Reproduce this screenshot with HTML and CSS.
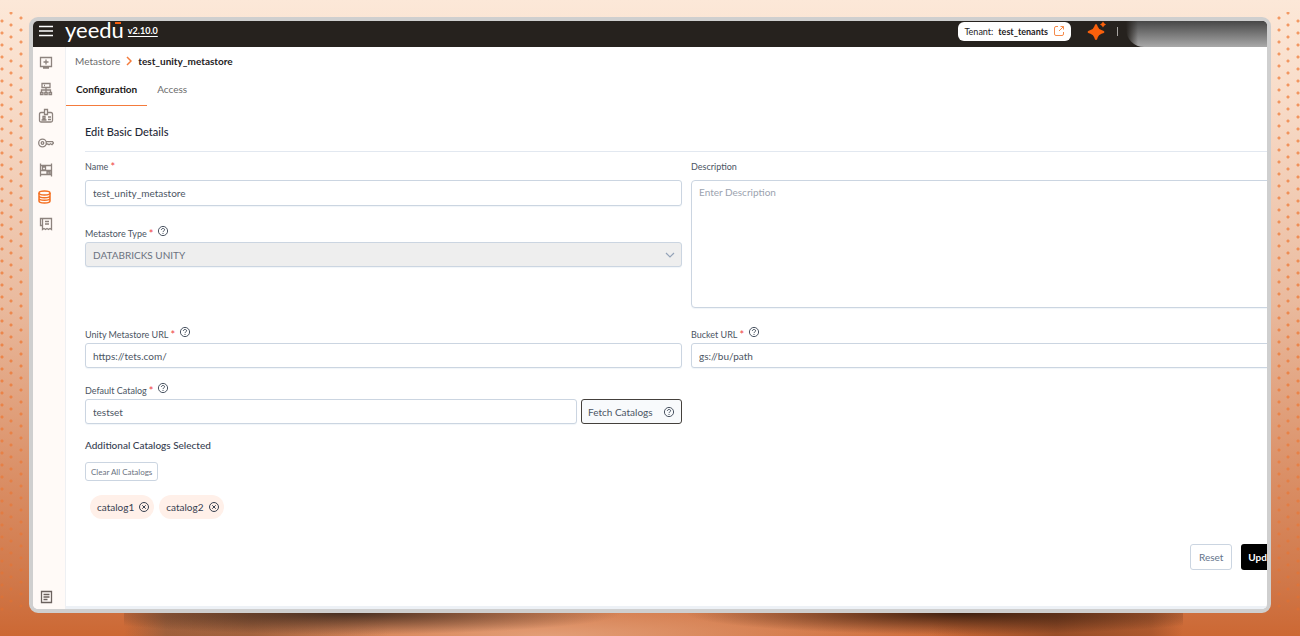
FILE: index.html
```
<!DOCTYPE html>
<html lang="en">
<head>
<meta charset="utf-8">
<title>Yeedu - Metastore</title>
<link rel="stylesheet" href="styles.css">
</head>
<body>
<svg class="sprite" aria-hidden="true">
  <symbol id="help" viewBox="0 0 12 12"><g fill="none" stroke="currentColor"><circle cx="6" cy="6" r="4.600"/><path d="M4.400 5c0-2.100 3.200-2 3.200-.200C7.600 5.900 6 5.800 6 7.100M6 8v1"/></g></symbol>
  <symbol id="close" viewBox="0 0 12 12"><g fill="none" stroke="currentColor"><circle cx="6" cy="6" r="4.500"/><path d="M4.300 4.300l3.400 3.400M7.700 4.300L4.300 7.700"/></g></symbol>
</svg>
<div class="dots dots-left"></div>
<div class="dots dots-right"></div>
<div class="floor"></div>
<main class="window">
  <header class="topbar">
    <button class="icon-button menu" aria-label="Menu"><svg width="14" height="12" viewBox="0 0 14 12"><path d="M0 1.500h14M0 6h14M0 10.500h14" stroke="#fff" stroke-width="1.600"/></svg></button>
    <span class="logo">yeed<span class="logo-u">u</span></span>
    <a class="version" href="#">v2.10.0</a>
    <a class="tenant" href="#"><span>Tenant:</span><b>test_tenants</b>
      <svg width="12" height="12" viewBox="0 0 12 12" fill="none" stroke="#f58a4b"><path d="M5 1.500H3Q1.500 1.500 1.500 3v6q0 1.500 1.500 1.500h6q1.500 0 1.500-1.500V7M6 6l4.500-4.500M7.500 1.500h3v3"/></svg></a>
    <button class="icon-button spark" aria-label="Assistant"><svg width="20" height="20" viewBox="0 0 20 20" fill="#f9600c"><path d="M9 3q1.200 0 1.700 2.500Q11.500 8 14.500 9q3 1 3 2t-3 1.800q-3 1-3.800 3.700Q10.200 19 9 19t-1.700-2.500Q6.500 13.800 3.500 12.800q-3-.800-3-1.800t3-2q3-1 3.800-3.500Q7.800 3 9 3z"/><path d="M16 .500q.800 2.200 3 3-2.200.800-3 3-.800-2.200-3-3 2.200-.800 3-3z"/></svg></button>
    <span class="divider"></span>
    <div class="account"></div>
  </header>
  <div class="body">
    <nav class="sidebar" aria-label="Main">
      <a href="#" aria-label="Workspaces"><svg viewBox="0 0 16 16"><path d="M2.500 3.500h11v9h-11zM5 14h6M8 5.500v5M5.500 8h5"/></svg></a>
      <a href="#" aria-label="Clusters"><svg viewBox="0 0 16 16"><path d="M4 2.500h8v4H4zM6 4.500h1M8 6.500v5M3.500 11V9h9v2M2.500 11.500h2.500v2H2.500zM6.800 11.500h2.400v2H6.800zM11 11.500h2.500v2H11z"/></svg></a>
      <a href="#" aria-label="Credentials"><svg viewBox="0 0 16 16"><path d="M6.500 4.500H3Q1.500 4.500 1.500 6v6.500Q1.500 14 3 14h10q1.500 0 1.500-1.500V6Q14.500 4.500 13 4.500H9.500M6.500 1.500h3v5h-3zM3.500 12h5M5 8.500h2v2H5zM10 9h3M10 11.500h3"/></svg></a>
      <a href="#" aria-label="Secrets"><svg viewBox="0 0 16 16"><circle cx="4.500" cy="8" r="3.800"/><circle cx="4.500" cy="8" r="1.300"/><path d="M8 6.700h6.500l1 1.300-1.500 1.700-1.500-.900L11 9.700l-1.200-.700H8"/></svg></a>
      <a href="#" aria-label="Storage"><svg viewBox="0 0 16 16"><path d="M2.500 1.500v13M13.500 1.500v13M2.500 3.500h11M2.500 8.500h11M2.500 12.500h11M4.500 5h3v3h-3zM9 10h3v2H9z"/></svg></a>
      <a href="#" class="active" aria-label="Metastore"><svg viewBox="0 0 16 16"><ellipse cx="6.500" cy="4" rx="5.500" ry="2"/><path d="M1 4v8q0 2 5.500 2t5.500-2V4M1 6.700q0 2 5.500 2t5.500-2M1 9.300q0 2 5.500 2t5.500-2"/></svg></a>
      <a href="#" aria-label="Billing"><svg viewBox="0 0 16 16"><path d="M4.500 2.500h9v11l-1.500-1-1.500 1-1.500-1-1.500 1-1.500-1-1.500 1zM4.500 9.500h-2v-7h2M7 5.500h4M7 8h4"/></svg></a>
      <a href="#" class="last" aria-label="Documentation"><svg viewBox="0 0 16 16"><path d="M3.500 2.500h10v11h-10zM5.500 5.500h6M5.500 8h6M5.500 10.500h4"/></svg></a>
    </nav>
    <section class="page">
      <nav class="crumbs" aria-label="Breadcrumb"><a href="#">Metastore</a><svg width="6" height="10" viewBox="0 0 6 10"><path d="M1 1l4 4-4 4" fill="none" stroke="#f47b3c" stroke-width="1.500"/></svg><b>test_unity_metastore</b></nav>
      <div class="tabs"><button class="tab selected">Configuration</button><button class="tab">Access</button></div>
      <form class="form">
        <h1>Edit Basic Details</h1>
        <div class="grid">
          <div class="column">
            <div class="field name"><div class="label"><label for="name">Name</label><i>*</i></div><input id="name" value="test_unity_metastore"></div>
            <div class="field"><div class="label"><label for="type">Metastore Type</label><i>*</i><svg class="help"><use href="#help"/></svg></div>
              <div class="select"><select id="type" disabled><option>DATABRICKS UNITY</option></select><svg width="10" height="6" viewBox="0 0 10 6"><path d="M1 1l4 4 4-4" fill="none" stroke="#94a3b8" stroke-width="1.200"/></svg></div></div>
          </div>
          <div class="field name"><div class="label"><label for="description">Description</label></div><textarea id="description" placeholder="Enter Description"></textarea></div>
          <div class="field"><div class="label"><label for="url">Unity Metastore URL</label><i>*</i><svg class="help"><use href="#help"/></svg></div><input id="url" value="https://tets.com/"></div>
          <div class="field"><div class="label"><label for="bucket">Bucket URL</label><i>*</i><svg class="help"><use href="#help"/></svg></div><input id="bucket" value="gs://bu/path"></div>
          <div class="field"><div class="label"><label for="catalog">Default Catalog</label><i>*</i><svg class="help"><use href="#help"/></svg></div>
            <div class="fetch-row"><input id="catalog" value="testset"><button type="button" class="fetch">Fetch Catalogs<svg class="help"><use href="#help"/></svg></button></div></div>
        </div>
        <h2>Additional Catalogs Selected</h2>
        <button type="button" class="clear">Clear All Catalogs</button>
        <div class="chips">
          <span class="chip">catalog1<button type="button" class="icon-button" aria-label="Remove catalog1"><svg class="help"><use href="#close"/></svg></button></span>
          <span class="chip">catalog2<button type="button" class="icon-button" aria-label="Remove catalog2"><svg class="help"><use href="#close"/></svg></button></span>
        </div>
        <div class="actions"><button type="reset" class="reset">Reset</button><button type="submit" class="update">Update</button></div>
      </form>
    </section>
  </div>
</main>
</body>
</html>
```
FILE: styles.css
```
* { box-sizing: border-box; }
body {
  margin: 0;
  height: 100vh;
  padding: 17px 29px 23px;
  overflow: hidden;
  position: relative;
  font-family: Lato, "Liberation Sans", sans-serif;
  font-size: 10px;
  color: #4b5563;
  background: linear-gradient(#fce8d8, #f8dcc9 15%, #eabb9f 47%, #da8f66 75%, #d07748 92%, #cc6834);
}
button, input, select, textarea { font: inherit; color: inherit; }
button { cursor: pointer; }
a { color: inherit; text-decoration: none; }
.sprite { position: absolute; width: 0; height: 0; }
.icon-button { display: flex; padding: 0; border: 0; background: none; }
.help { width: 12px; height: 12px; flex: none; }

.dots {
  position: absolute;
  top: 12px;
  bottom: 24px;
  width: 30px;
  opacity: .65;
  background-image:
    radial-gradient(circle, #f07026 1px, transparent 2px),
    radial-gradient(circle, #f07026 1px, transparent 2px),
    radial-gradient(circle, #f07026 1px, transparent 2px);
  background-size: 6px 12px;
  background-repeat: repeat-y;
  -webkit-mask-image: linear-gradient(#000 60%, rgba(0, 0, 0, .5));
  mask-image: linear-gradient(#000 60%, rgba(0, 0, 0, .5));
}
.dots-left { left: 0; background-position: -1px 3px, 8px 7px, 18px 0; }
.dots-right { right: 0; background-position: 6px 0, 15px 7px, 25px 3px; }

.floor {
  position: absolute;
  left: 124px;
  right: 117px;
  bottom: 0;
  height: 23px;
  background:
    radial-gradient(ellipse 26% 95% at 21% 0, rgba(58, 40, 30, .9), transparent),
    radial-gradient(ellipse 26% 95% at 79% 0, rgba(55, 28, 14, .95), transparent),
    linear-gradient(90deg, transparent, rgba(90, 75, 60, .4) 4%, rgba(90, 65, 45, .4) 12%, transparent 25%, transparent 76%, rgba(100, 50, 25, .5) 88%, rgba(100, 50, 25, .3) 97%, transparent),
    radial-gradient(ellipse 40% 180% at 40% 100%, rgba(232, 172, 136, .8), transparent);
}

.window {
  position: relative;
  height: 100%;
  display: flex;
  flex-direction: column;
  border: 4px solid #cfcfcf;
  border-radius: 9px;
  overflow: hidden;
  background: #fff;
}
.topbar {
  flex: none;
  height: 26px;
  display: flex;
  align-items: center;
  background: #26221e;
  color: #fff;
}
.menu { margin: 0 12px 7px 6px; }
.logo { font-size: 22px; line-height: 26px; margin: -9px 4px 0 0; }
.logo-u { position: relative; }
.logo-u::before {
  content: "";
  position: absolute;
  left: 3px;
  right: 3px;
  top: 6px;
  height: 2px;
  background: #f9600c;
}
.version { font-size: 9px; font-weight: 700; text-decoration: underline; text-underline-offset: 2px; margin-bottom: 8px; }
.tenant {
  margin: 0 16px 6px auto;
  height: 19px;
  padding: 0 6px;
  display: flex;
  align-items: center;
  gap: 5px;
  border-radius: 6px;
  background: #fff;
  color: #26221e;
  font-size: 9px;
}
.spark { margin-bottom: 7px; }
.divider { width: 1px; height: 9px; margin: 0 8px 5px 10px; background: #a8a5a2; }
.account {
  width: 141px;
  height: 100%;
  border-bottom-left-radius: 18px;
  background: linear-gradient(90deg, #26221e, transparent 12px), linear-gradient(#474747, #a9a9a9);
}

.body { flex: 1; min-height: 0; display: flex; }
.sidebar {
  flex: none;
  width: 33px;
  padding: 7px 0 4px 5px;
  display: flex;
  flex-direction: column;
  gap: 11px;
  background: #fffaf7;
  border-right: 1px solid #eef0f3;
  color: #8d837e;
}
.sidebar a { height: 16px; }
.sidebar svg { width: 16px; height: 16px; fill: none; stroke: currentColor; stroke-width: 1.300; }
.sidebar .active { color: #f47022; }
.sidebar .active svg { stroke-width: 1.500; }
.sidebar .last { margin-top: auto; color: #6b625e; }

.page { flex: 1; min-width: 0; border-bottom: 3px solid #edf1f6; }
.crumbs { display: flex; align-items: center; gap: 6px; height: 28px; padding-left: 9px; color: #6b6b6b; }
.crumbs b { color: #26221e; }
.tabs { display: flex; height: 31px; }
.tab { padding: 0 10px 2px; border: 0; border-bottom: 1px solid transparent; background: none; color: #6b6b6b; }
.tab.selected { border-color: #f47b3c; color: #1c1917; font-weight: 700; }

.form { width: calc(100% + 21px); padding-left: 19px; }
h1 { margin: 0; height: 46px; padding-top: 18px; border-bottom: 1px solid #e2e8f0; font-size: 11px; line-height: 16px; font-weight: 500; color: #1f2937; }
.grid { display: grid; grid-template-columns: 1fr 1fr; column-gap: 9px; row-gap: 15px; }
.grid > :nth-child(-n+2) { margin-bottom: 4px; }
.label { display: flex; align-items: center; height: 14px; font-size: 9px; margin-bottom: 2px; }
.label i { color: #ef4444; font-size: 11px; font-style: normal; margin: 0 4px 0 2px; }
.label .help { margin-bottom: 4px; }
.name { padding-top: 7px; }
.name .label { margin-bottom: 7px; }
.name input { height: 26px; }
.column { display: flex; flex-direction: column; gap: 20px; }
input, textarea, select {
  display: block;
  width: 100%;
  height: 25px;
  padding: 0 7px;
  border: 1px solid #cbd5e1;
  border-radius: 3px;
  background: #fff;
  box-shadow: 0 1px 1px #f1f5f9;
}
textarea { height: 128px; padding-top: 5px; resize: none; border-radius: 4px; }
::placeholder { color: #9ca3af; }
.select { position: relative; }
.select svg { position: absolute; right: 7px; top: 10px; }
select { appearance: none; background: #eeeeee; color: #6b7280; opacity: 1; }
.fetch-row { display: flex; gap: 4px; }
.fetch-row input { flex: 1; min-width: 0; }
.fetch { display: flex; align-items: center; justify-content: space-between; width: 101px; height: 25px; padding: 0 6px; border: 1px solid #44403c; border-radius: 3px; background: #f8fafc; }
h2 { margin: 13px 0 9px; font-size: 10px; line-height: 16px; font-weight: 500; color: #374151; }
.clear { height: 19px; padding: 0 5px; border: 1px solid #cbd5e1; border-radius: 3px; background: #fff; font-size: 8px; color: #6b7280; display: block; }
.chips { display: flex; gap: 5px; padding: 14px 0 0 5px; }
.chip { display: flex; align-items: center; gap: 4px; height: 24px; padding: 0 4px 0 7px; border-radius: 12px; background: #fff0e9; color: #374151; }
.actions { display: flex; justify-content: flex-end; gap: 9px; padding-top: 25px; }
.actions button { height: 26px; border-radius: 3px; }
.reset { padding: 0 8px; border: 1px solid #cbd5e1; background: #fff; color: #64748b; }
.update { padding: 0 7px; border: 0; background: #000; color: #fff; font-weight: 700; }
```
